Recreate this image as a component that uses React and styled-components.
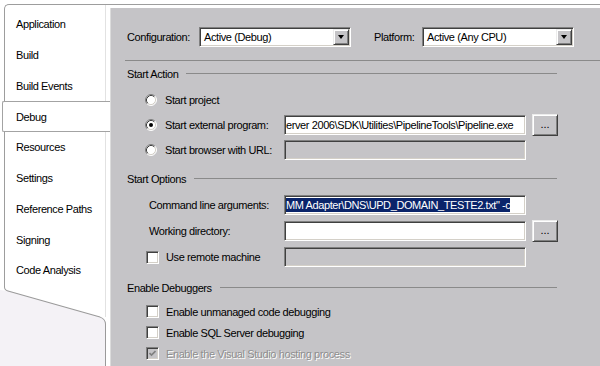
import React from "react";
import styled, { createGlobalStyle, css } from "styled-components";

const PANEL = "#c5c4c7";

const GlobalStyle = createGlobalStyle`
  html, body {
    margin: 0;
    padding: 0;
    background: #fff;
  }
  body {
    font-family: "Liberation Sans", Arial, sans-serif;
    font-size: 11px;
    letter-spacing: -0.4px;
    color: #000;
  }
`;

const Window = styled.div`
  display: flex;
  width: 600px;
  height: 366px;
  overflow: hidden;
  background: #fff;
`;

const Sidebar = styled.div`
  width: 110px;
  flex: none;
  display: flex;
  flex-direction: column;
  padding-top: 4px;
  box-sizing: border-box;
`;

const TabList = styled.ul`
  list-style: none;
  margin: 0 0 0 4px;
  padding: 4px 0 0;
  border-top: 1px solid #9d9d9d;
  border-left: 1px solid #9d9d9d;
  border-top-left-radius: 5px;
  box-shadow: inset -4px 0 0 #fff, inset -5px 0 0 #e2e2e2;
`;

const Tab = styled.li`
  height: 30.75px;
  box-sizing: border-box;
  display: flex;
  align-items: center;
  padding-left: 11px;
  white-space: nowrap;

  ${(p) =>
    p.$active &&
    css`
      margin-left: -3px;
      padding-left: 13px;
      background: #fff;
      border: 1px solid #a3a3a3;
      border-right: none;
      border-radius: 2px 0 0 2px;
    `}
`;

const Curl = styled.svg`
  display: block;
  flex: 1;
  width: 110px;
`;

const Main = styled.div`
  flex: 1;
  display: flex;
  flex-direction: column;
  padding-top: 4px;
`;

const TopRule = styled.div`
  height: 3px;
  border-top: 1px solid #9d9d9d;
`;

const Panel = styled.div`
  flex: 1;
  display: flex;
  flex-direction: column;
  background: ${PANEL};
  border-left: 1px solid #dcdcdc;
  padding: 19px 0 0 16px;
`;

const TopBar = styled.div`
  display: flex;
  align-items: center;
  height: 20px;
`;

const Label = styled.span`
  width: ${(p) => p.$w}px;
  margin-left: ${(p) => p.$left || 0}px;
  flex: none;
  white-space: nowrap;
`;

const sunken = css`
  box-sizing: border-box;
  border-top: 1px solid #808080;
  border-left: 1px solid #808080;
  border-right: 1px solid #fff;
  border-bottom: 1px solid #fff;
  box-shadow: inset 1px 1px 0 #404040, inset -1px -1px 0 #d4d0c8;
`;

const raised = css`
  box-sizing: border-box;
  background: ${PANEL};
  border: 1px solid;
  border-color: #ececec #404040 #404040 #ececec;
  box-shadow: inset 1px 1px 0 #fff, inset -1px -1px 0 #808080;
`;

const Combo = styled.div`
  ${sunken};
  width: 152px;
  height: 20px;
  display: flex;
  align-items: center;
  background: #fff;
  padding: 1px;
`;

const ComboText = styled.span`
  flex: 1;
  padding-left: 3px;
  white-space: nowrap;
`;

const ComboButton = styled.span`
  ${raised};
  width: 16px;
  height: 16px;
  display: flex;
  align-items: center;
  justify-content: center;

  &::after {
    content: "";
    width: 0;
    height: 0;
    border-left: 3.5px solid transparent;
    border-right: 3.5px solid transparent;
    border-top: 4px solid #000;
  }
`;

const Rule = styled.div`
  height: 1px;
  background: #8a8a8a;
  margin: 13px 0 0 -2px;
`;

const Section = styled.div`
  display: flex;
  align-items: center;
  height: 20px;
  margin-top: ${(p) => p.$top}px;
  white-space: nowrap;

  &::after {
    content: "";
    flex: 1;
    height: 1px;
    background: #8a8a8a;
    margin: 0 43px 0 8px;
    position: relative;
    top: -1px;
  }
`;

const Group = styled.div`
  padding-top: 3px;
`;

const Row = styled.div`
  display: flex;
  align-items: center;
  height: ${(p) => p.$h}px;
  padding-left: 18px;
`;

const Choice = styled.label`
  display: flex;
  align-items: center;
  gap: ${(p) => (p.$radio ? 8 : 7)}px;
  width: ${(p) => (p.$wide ? "auto" : "139px")};
  flex: none;
  white-space: nowrap;
  color: ${(p) => (p.$disabled ? "#8e8e8e" : "#000")};
  text-shadow: ${(p) => (p.$disabled ? "1px 1px 0 #fff" : "none")};
`;

const FieldLabel = styled.span`
  width: 139px;
  flex: none;
  padding-left: 4px;
  box-sizing: border-box;
  white-space: nowrap;
`;

const Field = styled.div`
  ${sunken};
  width: 242px;
  height: 20px;
  flex: none;
  display: flex;
  align-items: center;
  justify-content: ${(p) => (p.$end ? "flex-end" : "flex-start")};
  overflow: hidden;
  white-space: pre;
  padding: 0 2px 0 1px;
  background: ${(p) => (p.$disabled ? PANEL : "#fff")};
`;

const Selection = styled.span`
  display: inline-block;
  line-height: 14px;
  background: #0a246a;
  color: #fff;
`;

const Browse = styled.button`
  ${raised};
  width: 26px;
  height: 22px;
  margin-left: 6px;
  padding: 0 0 2px;
  font: inherit;
  letter-spacing: 0;
  color: #000;
  display: flex;
  align-items: center;
  justify-content: center;
`;

const RadioSvg = styled.svg`
  display: block;
  flex: none;
`;

const Box = styled.span`
  ${sunken};
  width: 13px;
  height: 13px;
  flex: none;
  margin-left: 1px;
  display: flex;
  align-items: center;
  justify-content: center;
  background: ${(p) => (p.$disabled ? PANEL : "#fff")};
`;

function Radio({ checked }) {
  return (
    <RadioSvg width="12" height="12" viewBox="0 0 12 12">
      <circle cx="6" cy="6" r="5" fill="#fff" />
      <path d="M2.11 9.89 A5.5 5.5 0 0 1 9.89 2.11" fill="none" stroke="#808080" />
      <path d="M9.89 2.11 A5.5 5.5 0 0 1 2.11 9.89" fill="none" stroke="#fff" />
      <path d="M2.82 9.18 A4.5 4.5 0 0 1 9.18 2.82" fill="none" stroke="#404040" />
      <path d="M9.18 2.82 A4.5 4.5 0 0 1 2.82 9.18" fill="none" stroke="#d4d0c8" />
      {checked && <circle cx="6" cy="6" r="2" fill="#000" />}
    </RadioSvg>
  );
}

function Check({ checked, disabled }) {
  return (
    <Box $disabled={disabled}>
      {checked && (
        <svg width="7" height="7" viewBox="0 0 7 7">
          <polyline
            points="0.5,3 2.5,5 6.5,1"
            fill="none"
            stroke={disabled ? "#808080" : "#000"}
            strokeWidth="1.7"
          />
        </svg>
      )}
    </Box>
  );
}

const tabs = [
  "Application",
  "Build",
  "Build Events",
  "Debug",
  "Resources",
  "Settings",
  "Reference Paths",
  "Signing",
  "Code Analysis",
];

export default function App() {
  return (
    <>
      <GlobalStyle />
      <Window>
        <Sidebar>
          <TabList>
            {tabs.map((t) => (
              <Tab key={t} $active={t === "Debug"}>
                {t}
              </Tab>
            ))}
          </TabList>
          <Curl viewBox="0 0 110 80" preserveAspectRatio="none">
            <path d="M0 4 L8 5 L100 31 Q105.5 33 105.5 38 L105.5 80 L0 80 Z" fill="#f4f2f6" />
            <path d="M105.5 0 L105.5 31" stroke="#e2e2e2" />
            <path
              d="M4.5 0 L4.5 1 Q4.5 4 8 5 L100 31 Q105.5 33 105.5 38 L105.5 80"
              fill="none"
              stroke="#9a9a9a"
            />
          </Curl>
        </Sidebar>

        <Main>
          <TopRule />
          <Panel>
            <TopBar>
              <Label $w={72}>Configuration:</Label>
              <Combo>
                <ComboText>Active (Debug)</ComboText>
                <ComboButton />
              </Combo>
              <Label $w={48} $left={23}>
                Platform:
              </Label>
              <Combo>
                <ComboText>Active (Any CPU)</ComboText>
                <ComboButton />
              </Combo>
            </TopBar>
            <Rule />

            <Section $top={3}>Start Action</Section>
            <Group>
              <Row $h={25}>
                <Choice $radio>
                  <Radio />
                  Start project
                </Choice>
              </Row>
              <Row $h={25}>
                <Choice $radio>
                  <Radio checked />
                  Start external program:
                </Choice>
                <Field>erver 2006\SDK\Utilities\PipelineTools\Pipeline.exe</Field>
                <Browse>...</Browse>
              </Row>
              <Row $h={25}>
                <Choice $radio>
                  <Radio />
                  Start browser with URL:
                </Choice>
                <Field $disabled />
              </Row>
            </Group>

            <Section $top={7}>Start Options</Section>
            <Group>
              <Row $h={26}>
                <FieldLabel>Command line arguments:</FieldLabel>
                <Field>
                  <Selection>MM Adapter\DNS\UPD_DOMAIN_TESTE2.txt" -c</Selection>
                </Field>
              </Row>
              <Row $h={26}>
                <FieldLabel>Working directory:</FieldLabel>
                <Field />
                <Browse>...</Browse>
              </Row>
              <Row $h={26}>
                <Choice>
                  <Check />
                  Use remote machine
                </Choice>
                <Field $disabled />
              </Row>
            </Group>

            <Section $top={8}>Enable Debuggers</Section>
            <Group>
              <Row $h={21}>
                <Choice $wide>
                  <Check />
                  Enable unmanaged code debugging
                </Choice>
              </Row>
              <Row $h={21}>
                <Choice $wide>
                  <Check />
                  Enable SQL Server debugging
                </Choice>
              </Row>
              <Row $h={21}>
                <Choice $wide $disabled>
                  <Check checked disabled />
                  Enable the Visual Studio hosting process
                </Choice>
              </Row>
            </Group>
          </Panel>
        </Main>
      </Window>
    </>
  );
}
